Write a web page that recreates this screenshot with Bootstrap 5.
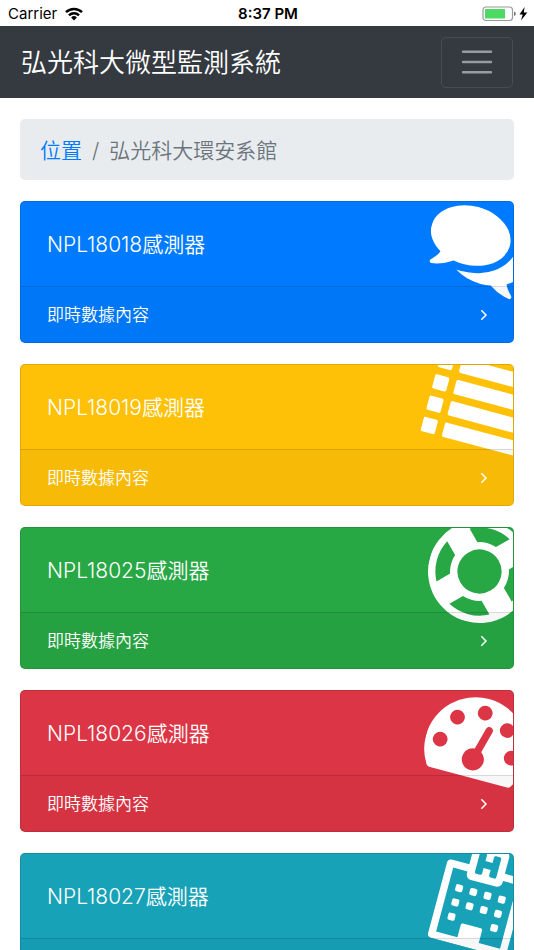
<!DOCTYPE html>
<html lang="zh-Hant">
<head>
<meta charset="utf-8">
<meta name="viewport" content="width=device-width, initial-scale=1">
<title>弘光科大微型監測系統</title>
<link href="https://cdn.jsdelivr.net/npm/bootstrap@5.3.0/dist/css/bootstrap.min.css" rel="stylesheet">
<style>
  html { scrollbar-width: none; }
  html::-webkit-scrollbar { display: none; }
  body { font-family: Inter, "Noto Sans CJK TC", sans-serif; font-size: 21px; line-height: 31px; font-weight: 350; }
  .status-bar { display: grid; grid-template-columns: 1fr auto 1fr; height: 26px; padding: 1px 6px 0 8px; font-family: Inter, sans-serif; font-size: 15px; line-height: 26px; font-weight: 400; color: #000; }
  .status-bar .clock { font-weight: 600; }
  .main-nav { background: #343a40; min-height: 72px; padding: 10px 21px; }
  .main-nav .navbar-brand { font-size: 26px; line-height: 39px; color: #fff; }
  .main-nav .navbar-toggler { width: 72px; height: 51px; padding: 0; border: 1px solid #484d53; border-radius: 5px; line-height: 1; }
  .page-main { padding: 21px 20px 0; }
  .crumbs { background: #e9ecef; border-radius: 5px; padding: 16px 20px 14px; margin-bottom: 21px; --bs-breadcrumb-item-padding-x: 10px; --bs-breadcrumb-divider-color: #6c757d; --bs-breadcrumb-item-active-color: #6c757d; }
  .crumbs a { color: #007bff; }
  .sensor { color: #fff; border: 1px solid rgba(0,0,0,.125); border-radius: 5px; margin-bottom: 21px; overflow: hidden; background-clip: border-box; }
  .sensor .card-body { padding: 27px 26px 26px; line-height: 31px; flex: none; }
  .sensor .card-footer { padding: 15px 25px 14px 26px; font-size: 17px; line-height: 26px; border-top: 1px solid rgba(0,0,0,.125); background: rgba(0,0,0,.03); border-radius: 0; }
  .sensor-icon { position: absolute; top: -8px; right: -18px; width: 103px; height: 103px; transform: rotate(15deg); fill: #fff; }
  .tone-blue { background: #007bff; }
  .tone-amber { background: #ffc107; }
  .tone-green { background: #28a745; }
  .tone-red { background: #dc3545; }
  .tone-teal { background: #17a2b8; }
</style>
<script src="https://cdn.jsdelivr.net/npm/bootstrap@5.3.0/dist/js/bootstrap.bundle.min.js"></script>
</head>
<body>
<div class="status-bar">
  <div class="d-flex align-items-center gap-2"><span>Carrier</span>
    <svg width="18" height="14" viewBox="0 0 18 14" fill="none" stroke="#000" stroke-width="2.5" aria-hidden="true"><path d="M1 5.2a11.4 11.4 0 0 1 16 0M4 8.3a7.2 7.2 0 0 1 10 0"/><path d="M9 13.4 6.1 10.5a4.1 4.1 0 0 1 5.8 0z" fill="#000" stroke="none"/></svg>
  </div>
  <div class="clock">8:37 PM</div>
  <div class="d-flex align-items-center justify-content-end">
    <svg width="46" height="16" viewBox="0 0 46 16" aria-hidden="true"><rect x="1" y="1" width="29.5" height="13.5" rx="3" fill="none" stroke="#999" stroke-width="1.2"/><rect x="3" y="3" width="20" height="9.5" rx=".5" fill="#4cd964"/><path d="M32 5.500q1.800.6 1.800 2.300T32 10z" fill="#777"/><path d="M42.600 1 37.500 8.400h3.200L39 14.600l6.300-8h-3.500z" fill="#000"/></svg>
  </div>
</div>
<nav class="navbar navbar-dark main-nav">
  <a class="navbar-brand m-0 p-0" href="#">弘光科大微型監測系統</a>
  <button class="navbar-toggler" type="button" aria-label="選單">
    <svg width="32" height="26" viewBox="0 0 32 26" stroke="#999c9f" stroke-width="2.4" stroke-linecap="round" aria-hidden="true"><path d="M2 2.800h28M2 13h28M2 23.200h28"/></svg>
  </button>
</nav>
<main class="page-main">
  <nav aria-label="位置">
    <ol class="breadcrumb crumbs">
      <li class="breadcrumb-item"><a class="text-decoration-none" href="#">位置</a></li>
      <li class="breadcrumb-item active" aria-current="page">弘光科大環安系館</li>
    </ol>
  </nav>

  <section class="card sensor tone-blue">
    <div class="card-body">
      <svg class="sensor-icon" viewBox="0 0 1792 1792" aria-hidden="true"><path d="M1408 768q0 139-94 257t-256.500 186.500-353.500 68.500q-86 0-176-16-124 88-278 128-36 9-86 16h-3q-11 0-20.500-8t-11.500-21q-1-3-1-6.500t.5-6.500 2-6l2.500-5 3.500-5.500 4-5 4.500-5 4-4.500q5-6 23-25t26-29.500 22.500-29 25-38.500 20.500-44q-124-72-195-177t-71-224q0-139 94-257t256.500-186.500 353.500-68.500 353.500 68.500 256.500 186.500 94 257zm384 256q0 120-71 224.500t-195 176.500q10 24 20.500 44t25 38.500 22.500 29 26 29.500 23 25q1 1 4 4.500t4.500 5 4 5 3.500 5.500l2.500 5 2 6 .5 6.500-1 6.500q-3 14-13 22t-22 7q-50-7-86-16-154-40-278-128-90 16-176 16-271 0-472-132 58 4 88 4 161 0 309-45t264-129q125-92 192-212t67-254q0-77-23-152 129 71 204 178t75 230z"/></svg>
      <div>NPL18018感測器</div>
    </div>
    <a class="card-footer d-flex justify-content-between align-items-center position-relative text-white text-decoration-none" href="#"><span>即時數據內容</span><svg width="8" height="12" viewBox="0 0 8 12" fill="none" stroke="#fff" stroke-width="1.500" aria-hidden="true"><path d="M1.300 1.300 6 6l-4.700 4.700"/></svg></a>
  </section>

  <section class="card sensor tone-amber">
    <div class="card-body">
      <svg class="sensor-icon" viewBox="0 0 1792 1792" aria-hidden="true"><rect y="128" width="256" height="256" rx="32"/><rect y="512" width="256" height="256" rx="32"/><rect y="896" width="256" height="256" rx="32"/><rect y="1280" width="256" height="256" rx="32"/><rect x="384" y="128" width="1408" height="256" rx="32"/><rect x="384" y="512" width="1408" height="256" rx="32"/><rect x="384" y="896" width="1408" height="256" rx="32"/><rect x="384" y="1280" width="1408" height="256" rx="32"/></svg>
      <div>NPL18019感測器</div>
    </div>
    <a class="card-footer d-flex justify-content-between align-items-center position-relative text-white text-decoration-none" href="#"><span>即時數據內容</span><svg width="8" height="12" viewBox="0 0 8 12" fill="none" stroke="#fff" stroke-width="1.500" aria-hidden="true"><path d="M1.300 1.300 6 6l-4.700 4.700"/></svg></a>
  </section>

  <section class="card sensor tone-green">
    <div class="card-body">
      <svg class="sensor-icon" viewBox="0 0 1792 1792" aria-hidden="true"><path d="M896 0q182 0 348 71t286 191 191 286 71 348-71 348-191 286-286 191-348 71-348-71-286-191-191-286-71-348 71-348 191-286 286-191 348-71zm0 128q-190 0-361 90l194 194q82-28 167-28t167 28l194-194q-171-90-361-90zm-678 1129l194-194q-28-82-28-167t28-167l-194-194q-90 171-90 361t90 361zm678 407q190 0 361-90l-194-194q-82 28-167 28t-167-28l-194 194q171 90 361 90zm0-384q159 0 271.500-112.500t112.500-271.500-112.500-271.500-271.500-112.500-271.500 112.500-112.500 271.500 112.500 271.500 271.500 112.500zm484-217l194 194q90-171 90-361t-90-361l-194 194q28 82 28 167t-28 167z" fill-rule="evenodd"/></svg>
      <div>NPL18025感測器</div>
    </div>
    <a class="card-footer d-flex justify-content-between align-items-center position-relative text-white text-decoration-none" href="#"><span>即時數據內容</span><svg width="8" height="12" viewBox="0 0 8 12" fill="none" stroke="#fff" stroke-width="1.500" aria-hidden="true"><path d="M1.300 1.300 6 6l-4.700 4.700"/></svg></a>
  </section>

  <section class="card sensor tone-red">
    <div class="card-body">
      <svg class="sensor-icon" viewBox="0 0 1792 1792" aria-hidden="true"><path fill-rule="evenodd" d="M384 1152q0-53-37.500-90.500t-90.500-37.500-90.500 37.500-37.500 90.500 37.500 90.500 90.500 37.500 90.500-37.500 37.500-90.500zm192-448q0-53-37.500-90.500t-90.500-37.500-90.500 37.500-37.500 90.500 37.500 90.500 90.500 37.500 90.500-37.500 37.500-90.500zm428 481l101-382q6-26-7.500-48.500t-38.500-29.500-48 6.500-30 39.500l-101 382q-60 5-107 43.500t-63 98.500q-20 77 20 146t117 89 146-20 89-117q16-60-6-117t-72-91zm660-33q0-53-37.500-90.500t-90.500-37.500-90.500 37.500-37.500 90.500 37.500 90.500 90.500 37.500 90.500-37.500 37.500-90.500zm-640-640q0-53-37.500-90.500t-90.500-37.500-90.500 37.500-37.500 90.500 37.500 90.500 90.500 37.500 90.500-37.500 37.500-90.500zm448 192q0-53-37.500-90.500t-90.500-37.500-90.500 37.500-37.500 90.500 37.500 90.500 90.500 37.500 90.500-37.500 37.500-90.500zm320 448q0 261-141 483-19 29-54 29h-1402q-35 0-54-29-141-221-141-483 0-182 71-348t191-286 286-191 348-71 348 71 286 191 191 286 71 348z"/></svg>
      <div>NPL18026感測器</div>
    </div>
    <a class="card-footer d-flex justify-content-between align-items-center position-relative text-white text-decoration-none" href="#"><span>即時數據內容</span><svg width="8" height="12" viewBox="0 0 8 12" fill="none" stroke="#fff" stroke-width="1.500" aria-hidden="true"><path d="M1.300 1.300 6 6l-4.700 4.700"/></svg></a>
  </section>

  <section class="card sensor tone-teal">
    <div class="card-body">
      <svg class="sensor-icon" viewBox="-192 0 1792 1792" aria-hidden="true">
        <path fill-rule="evenodd" d="M384 384V96q0-40 28-68t68-28h448q40 0 68 28t28 68v288h320q26 0 45 19t19 45v1280q0 26-19 45t-45 19H64q-26 0-45-19t-19-45V448q0-26 19-45t45-19zM128 512v1152h384v-224q0-13 9.500-22.500t22.500-9.500h320q13 0 22.500 9.500t9.500 22.500v224h384V512h-256v32q0 40-28 68t-68 28H480q-40 0-68-28t-28-68v-32zM544 128q-32 0-32 32v320q0 32 32 32h64q32 0 32-32v-96h128v96q0 32 32 32h64q32 0 32-32V160q0-32-32-32h-64q-32 0-32 32v96H640v-96q0-32-32-32z"/>
        <rect x="256" y="768" width="128" height="128" rx="32"/><rect x="512" y="768" width="128" height="128" rx="32"/><rect x="768" y="768" width="128" height="128" rx="32"/><rect x="1024" y="768" width="128" height="128" rx="32"/>
        <rect x="256" y="1024" width="128" height="128" rx="32"/><rect x="512" y="1024" width="128" height="128" rx="32"/><rect x="768" y="1024" width="128" height="128" rx="32"/><rect x="1024" y="1024" width="128" height="128" rx="32"/>
        <rect x="256" y="1280" width="128" height="128" rx="32"/><rect x="1024" y="1280" width="128" height="128" rx="32"/>
      </svg>
      <div>NPL18027感測器</div>
    </div>
    <a class="card-footer d-flex justify-content-between align-items-center position-relative text-white text-decoration-none" href="#"><span>即時數據內容</span><svg width="8" height="12" viewBox="0 0 8 12" fill="none" stroke="#fff" stroke-width="1.500" aria-hidden="true"><path d="M1.300 1.300 6 6l-4.700 4.700"/></svg></a>
  </section>
</main>
</body>
</html>
